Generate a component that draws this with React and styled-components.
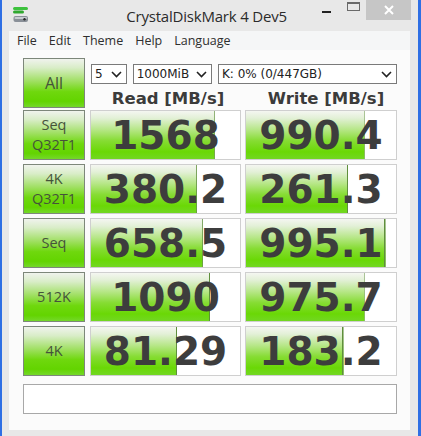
import styled, { createGlobalStyle } from "styled-components";

const Global = createGlobalStyle`
  html, body {
    margin: 0;
    padding: 0;
    background: #2f6fe4;
  }
`;

const Window = styled.div`
  width: 416px;
  height: 436px;
  margin-left: 2px;
  background: #e8e8e8;
  display: flex;
  flex-direction: column;
  box-sizing: border-box;
  padding: 0 8px 6px 7px;
  font-family: "Open Sans", "Noto Sans", sans-serif;
`;

const TitleBar = styled.div`
  height: 31px;
  display: grid;
  grid-template-columns: 1fr auto 1fr;
  align-items: start;
  margin: 0 -1px 0 -7px;
`;

const AppIcon = styled.div`
  padding: 6px 0 0 10px;
  height: 18px;
`;

const Title = styled.div`
  font-size: 15px;
  color: #2b2b2b;
  line-height: 18px;
  padding-top: 7px;
  letter-spacing: -0.2px;
`;

const Controls = styled.div`
  display: flex;
  justify-content: flex-end;
`;

const CtrlButton = styled.div`
  width: ${(p) => (p.$close ? 45 : 26)}px;
  height: 20px;
  background: ${(p) => (p.$close ? "#c6c6c6" : "transparent")};
  display: flex;
  align-items: center;
  justify-content: center;
`;

const MenuBar = styled.div`
  height: 19px;
  background: #f5f6f7;
  display: flex;
  align-items: center;
  padding-left: 2px;
  font-size: 12.5px;
  color: #2e2e2e;
`;

const MenuItem = styled.span`
  padding: 0 6px;
  line-height: 19px;
`;

const Content = styled.div`
  flex: 1;
  background: #fbfbfb;
  padding: 8px 13px 13px 14px;
  display: flex;
  flex-direction: column;
`;

const Grid = styled.div`
  display: grid;
  grid-template-columns: 62px 152px 152px;
  column-gap: 4px;
  row-gap: 4px;
  & > :nth-child(3n + 2) {
    margin-left: 1px;
  }
`;

const TopGrid = styled(Grid)`
  margin-bottom: 1px;
`;

const LabelButton = styled.div`
  height: 50px;
  box-sizing: border-box;
  border: 1px solid #7d877a;
  background: linear-gradient(
    to bottom,
    #f0f3ed 0%,
    #d9edc8 18%,
    #a2e067 45%,
    #6fd80e 68%,
    #63d400 88%,
    #74d82a 100%
  );
  display: flex;
  flex-direction: column;
  align-items: center;
  justify-content: center;
  color: #45533a;
  font-size: ${(p) => (p.$big ? 16 : 14.5)}px;
  line-height: 20px;
  text-align: center;
`;

const TopRight = styled.div`
  grid-column: 2 / span 2;
  display: flex;
  flex-direction: column;
`;

const SelectRow = styled.div`
  display: flex;
  gap: 6px;
  margin-top: 6px;
  margin-left: 1px;
`;

const Select = styled.div`
  width: ${(p) => p.$w}px;
  height: 20px;
  box-sizing: border-box;
  border: 1px solid #7a7a7a;
  background: #fff;
  display: flex;
  align-items: center;
  justify-content: space-between;
  padding: 0 4px 0 3px;
  font-family: "DejaVu Sans", Verdana, sans-serif;
  font-size: 12px;
  color: #222;
`;

const HeaderRow = styled.div`
  display: grid;
  grid-template-columns: 152px 152px;
  column-gap: 4px;
  margin-left: 1px;
  margin-top: 5px;
`;

const Header = styled.div`
  text-align: center;
  font-family: "DejaVu Sans", Verdana, sans-serif;
  font-weight: bold;
  font-size: 16.5px;
  color: #3b3b3b;
  line-height: 20px;
  padding-left: ${(p) => p.$pad || 0}px;
`;

const Meter = styled.div`
  height: 50px;
  box-sizing: border-box;
  border: 1px solid #cfcfcf;
  background-color: #fff;
  background-image: linear-gradient(
      to right,
      transparent calc(100% - 1px),
      #5f8f3c calc(100% - 1px)
    ),
    linear-gradient(
      to bottom,
      #f4f6f1 0%,
      #e2f0d6 15%,
      #b4e683 40%,
      #86dc33 62%,
      #6ad806 85%,
      #72d722 100%
    );
  background-repeat: no-repeat;
  background-size: ${(p) => p.$fill}% 100%;
  display: flex;
  align-items: center;
  justify-content: center;
  font-family: "DejaVu Sans", Verdana, sans-serif;
  font-weight: bold;
  font-size: 39px;
  color: #3d3d3d;
`;

const Comment = styled.div`
  margin-top: 8px;
  height: 30px;
  box-sizing: border-box;
  border: 1px solid #a8a8a8;
  background: #fff;
  width: 374px;
`;

const Chevron = () => (
  <svg width="11" height="7" viewBox="0 0 11 7">
    <path d="M1 1 L5.5 5.5 L10 1" fill="none" stroke="#222" strokeWidth="1.6" />
  </svg>
);

const rows = [
  { label: ["Seq", "Q32T1"], read: "1568", rf: 83, write: "990.4", wf: 79 },
  { label: ["4K", "Q32T1"], read: "380.2", rf: 71, write: "261.3", wf: 68 },
  { label: ["Seq"], read: "658.5", rf: 75, write: "995.1", wf: 93 },
  { label: ["512K"], read: "1090", rf: 80, write: "975.7", wf: 79 },
  { label: ["4K"], read: "81.29", rf: 58, write: "183.2", wf: 65 },
];

export default function App() {
  return (
    <>
      <Global />
      <Window>
        <TitleBar>
          <AppIcon>
            <svg width="17" height="17" viewBox="0 0 17 17">
              <rect x="1" y="1" width="15" height="3" rx="1.5" fill="#3cc13c" />
              <rect x="1" y="4.5" width="11" height="3" rx="1.5" fill="#2fa82f" />
              <rect x="1.5" y="10" width="14.5" height="6" rx="2" fill="#8a9098" />
              <rect x="2.5" y="11" width="12.5" height="2" rx="1" fill="#c8ccd2" />
              <circle cx="12.5" cy="13.2" r="1.2" fill="#2a2a2a" />
            </svg>
          </AppIcon>
          <Title>CrystalDiskMark 4 Dev5</Title>
          <Controls>
            <CtrlButton>
              <svg width="10" height="10" viewBox="0 0 10 10">
                <rect x="0" y="6" width="9" height="2" fill="#222" />
              </svg>
            </CtrlButton>
            <CtrlButton>
              <svg width="13" height="10" viewBox="0 0 13 10" style={{ marginTop: -6 }}>
                <rect x="0.5" y="0.5" width="12" height="8" fill="none" stroke="#6a6a6a" />
                <rect x="0.5" y="0.5" width="12" height="1.5" fill="#6a6a6a" />
              </svg>
            </CtrlButton>
            <CtrlButton $close>
              <svg width="10" height="10" viewBox="0 0 10 10">
                <path d="M1 1 L9 9 M9 1 L1 9" stroke="#fff" strokeWidth="2" />
              </svg>
            </CtrlButton>
          </Controls>
        </TitleBar>
        <MenuBar>
          <MenuItem>File</MenuItem>
          <MenuItem>Edit</MenuItem>
          <MenuItem>Theme</MenuItem>
          <MenuItem>Help</MenuItem>
          <MenuItem>Language</MenuItem>
        </MenuBar>
        <Content>
          <TopGrid>
            <LabelButton $big>All</LabelButton>
            <TopRight>
              <SelectRow>
                <Select $w={36}>
                  5 <Chevron />
                </Select>
                <Select $w={80}>
                  1000MiB <Chevron />
                </Select>
                <Select $w={181}>
                  K: 0% (0/447GB) <Chevron />
                </Select>
              </SelectRow>
              <HeaderRow>
                <Header $pad={2}>Read [MB/s]</Header>
                <Header $pad={6}>Write [MB/s]</Header>
              </HeaderRow>
            </TopRight>
          </TopGrid>
          <Grid>
            {rows.map((r, i) => [
              <LabelButton key={"l" + i}>
                {r.label.map((t) => (
                  <span key={t}>{t}</span>
                ))}
              </LabelButton>,
              <Meter key={"r" + i} $fill={r.rf}>
                {r.read}
              </Meter>,
              <Meter key={"w" + i} $fill={r.wf}>
                {r.write}
              </Meter>,
            ])}
          </Grid>
          <Comment />
        </Content>
      </Window>
    </>
  );
}
